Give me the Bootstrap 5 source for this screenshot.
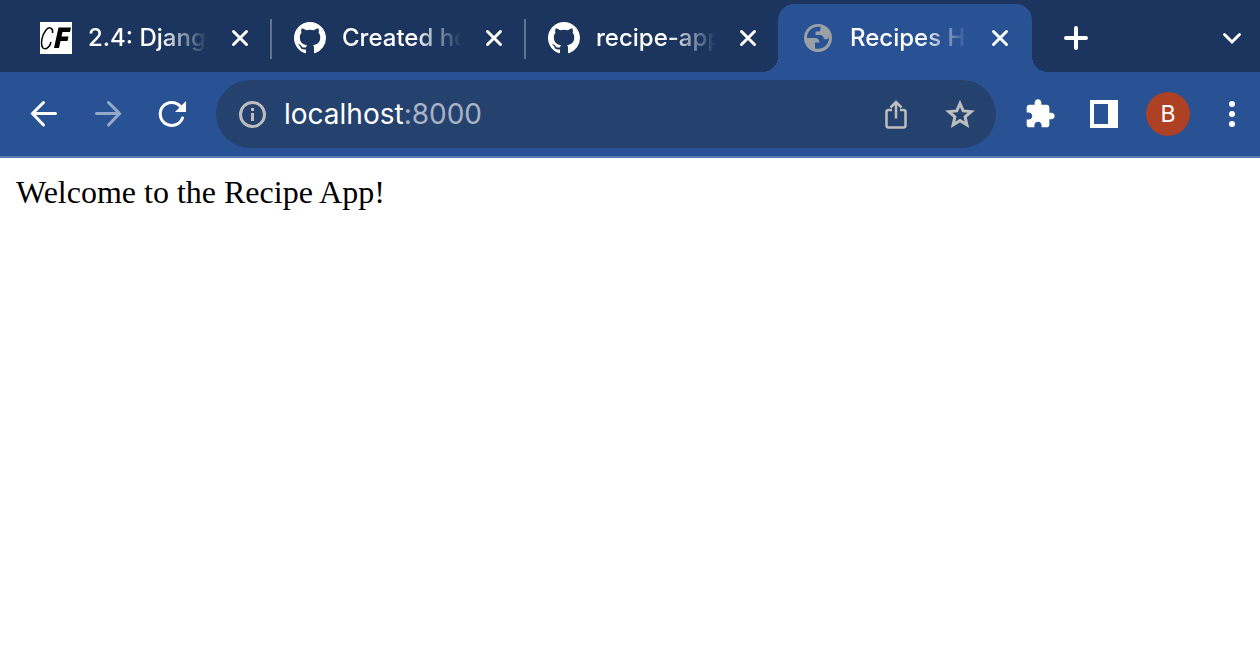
<!DOCTYPE html>
<html lang="en">
<head>
<meta charset="utf-8">
<meta name="viewport" content="width=device-width, initial-scale=1">
<title>Recipes Home</title>
<link href="https://cdn.jsdelivr.net/npm/bootstrap@5.3.0/dist/css/bootstrap.min.css" rel="stylesheet">
<style>
  :root { --frame: #1b355e; --bar: #295295; --omni: #25426f; }
  body { background: #fff; color: #000; }
  .chrome-ui { font-family: Inter, "Liberation Sans", sans-serif; color: #fff; }
  .tab-strip { background: var(--frame); height: 72px; padding-left: 18px; padding-right: 12px; padding-top: 4px; }
  .browser-tab { width: 254px; height: 68px; padding-left: 22px; position: relative; }
  .browser-tab.divided::after { content: ""; position: absolute; right: 0; top: 15px; width: 2px; height: 40px; background: #617391; }
  .browser-tab.current { background: var(--bar); border-radius: 16px 16px 0 0; margin-left: -2px; padding-left: 24px; }
  .browser-tab.current::before, .browser-tab.current::after { content: ""; position: absolute; bottom: 0; width: 16px; height: 16px; }
  .browser-tab.current::before { right: 100%; background: radial-gradient(circle at 0 0, transparent 16px, var(--bar) 16px); }
  .browser-tab.current::after { left: 100%; background: radial-gradient(circle at 100% 0, transparent 16px, var(--bar) 16px); }
  .tab-link { color: #fff; font-size: 24px; font-weight: 500; line-height: 32px; gap: 16px; }
  .tab-title { width: 120px; overflow: hidden; white-space: nowrap; -webkit-mask-image: linear-gradient(90deg, #000 60%, transparent); mask-image: linear-gradient(90deg, #000 60%, transparent); }
  .current .tab-title { width: 118px; }
  .icon-btn { background: none; border: 0; padding: 0; color: #fff; display: inline-flex; align-items: center; justify-content: center; flex: none; }
  .close-btn { width: 24px; height: 24px; margin-left: 20px; }
  .tool-bar { background: var(--bar); height: 86px; border-bottom: 2px solid #557ab0; padding-left: 12px; padding-right: 4px; }
  .nav-btn { width: 64px; height: 64px; }
  .new-tab-btn { width: 64px; height: 64px; margin-left: 12px; }
  .menu-btn { width: 48px; height: 64px; }
  .omnibox { background: var(--omni); height: 68px; margin-left: 12px; margin-right: 12px; padding-left: 20px; padding-right: 4px; }
  .muted-icon { color: #bdbdbd; }
  .url-field { font-size: 28px; line-height: 36px; margin-left: 16px; }
  .url-port { color: #a8b3c5; }
  .avatar { width: 44px; height: 44px; background: #ae4123; font-size: 23px; }
  .page-body { padding: 16px; font-family: "Liberation Serif", serif; font-size: 32px; line-height: 36px; }
</style>
</head>
<body>
<svg class="d-none" aria-hidden="true">
  <symbol id="octo" viewBox="0 0 16 16"><path fill="currentColor" d="M8 0C3.58 0 0 3.58 0 8c0 3.54 2.29 6.53 5.47 7.59.4.07.55-.17.55-.38 0-.19-.01-.82-.01-1.49-2.01.37-2.53-.49-2.69-.94-.09-.23-.48-.94-.82-1.13-.28-.15-.68-.52-.01-.53.63-.01 1.08.58 1.23.82.72 1.21 1.87.87 2.33.66.07-.52.28-.87.51-1.07-1.78-.2-3.64-.89-3.64-3.95 0-.87.31-1.59.82-2.15-.08-.2-.36-1.02.08-2.12 0 0 .67-.21 2.2.82.64-.18 1.32-.27 2-.27s1.36.09 2 .27c1.53-1.04 2.2-.82 2.2-.82.44 1.1.16 1.92.08 2.12.51.56.82 1.27.82 2.15 0 3.07-1.87 3.75-3.65 3.95.29.25.54.73.54 1.48 0 1.07-.01 1.93-.01 2.2 0 .21.15.46.55.38A8.01 8.01 0 0 0 16 8c0-4.42-3.58-8-8-8z"/></symbol>
  <symbol id="cross" viewBox="0 0 24 24"><path fill="none" stroke="currentColor" stroke-width="3" stroke-linecap="round" d="M5.500 5.500l13 13M18.500 5.500l-13 13"/></symbol>
</svg>
<header class="chrome-ui">
  <nav class="tab-strip d-flex" aria-label="Tabs">
    <div class="browser-tab divided d-flex align-items-center">
      <a href="#" class="tab-link d-flex text-decoration-none">
        <svg width="32" height="32" viewBox="0 0 32 32"><path fill="#fff" d="M0 0h32v32H0z"/><path fill="none" stroke="#000" stroke-width="1.500" d="M12.500 11C13.500 6 9 4 6 8C2 13 0 22 3 26C6 28 10 25 11 20"/><path d="M18.500 5.500h12.500l-1 4.500h-7.500l-1 4.500h7l-1 4.500h-7l-1.500 7h-5z"/></svg>
        <span class="tab-title">2.4: Django</span></a>
      <button class="icon-btn close-btn" aria-label="Close tab"><svg width="24" height="24"><use href="#cross"/></svg></button>
    </div>
    <div class="browser-tab divided d-flex align-items-center">
      <a href="#" class="tab-link d-flex text-decoration-none"><svg width="32" height="32"><use href="#octo"/></svg><span class="tab-title">Created home</span></a>
      <button class="icon-btn close-btn" aria-label="Close tab"><svg width="24" height="24"><use href="#cross"/></svg></button>
    </div>
    <div class="browser-tab d-flex align-items-center">
      <a href="#" class="tab-link d-flex text-decoration-none"><svg width="32" height="32"><use href="#octo"/></svg><span class="tab-title">recipe-app</span></a>
      <button class="icon-btn close-btn" aria-label="Close tab"><svg width="24" height="24"><use href="#cross"/></svg></button>
    </div>
    <div class="browser-tab current d-flex align-items-center">
      <a href="#" class="tab-link d-flex text-decoration-none" aria-current="page">
        <svg width="32" height="32" viewBox="0 0 32 32"><circle cx="16" cy="16" r="14" fill="#9aa0a6"/><path fill="#295295" d="M18.500 5C11 4 5 9 5 16h7.500C16 16 17.500 18 17.500 20.500H13v6C21 28 27 23 27 15.500C25.500 17.500 23.500 18 22 16.500C21 14.500 20.500 13 17.500 13H13.500V9.500H17.500C18.500 9 18.500 7 18.500 5z"/></svg>
        <span class="tab-title">Recipes Home</span></a>
      <button class="icon-btn close-btn" aria-label="Close tab"><svg width="24" height="24"><use href="#cross"/></svg></button>
    </div>
    <button class="icon-btn new-tab-btn align-self-center" aria-label="New tab"><svg width="24" height="24" viewBox="0 0 24 24"><path stroke="currentColor" stroke-width="4" stroke-linecap="round" d="M2 12h20M12 2v20"/></svg></button>
    <button class="icon-btn ms-auto align-self-center me-1" aria-label="Search tabs"><svg width="24" height="24" viewBox="0 0 24 24"><path fill="none" stroke="currentColor" stroke-width="3" stroke-linecap="round" d="M4.500 8.500l7.500 7.500 7.500-7.500"/></svg></button>
  </nav>
  <div class="tool-bar d-flex align-items-center">
    <button class="icon-btn nav-btn" aria-label="Back"><svg width="32" height="32" viewBox="0 0 32 32"><path fill="none" stroke="currentColor" stroke-width="3" stroke-linecap="round" d="M27.500 15.500H4.500M15.500 4.500L4.500 15.500l11 11.500"/></svg></button>
    <button class="icon-btn nav-btn opacity-50" aria-label="Forward"><svg width="32" height="32" viewBox="0 0 32 32"><path fill="none" stroke="currentColor" stroke-width="3" stroke-linecap="round" d="M4.500 15.500h23M16.500 4.500L27.500 15.500 16.500 27"/></svg></button>
    <button class="icon-btn nav-btn" aria-label="Reload"><svg width="32" height="32" viewBox="0 0 32 32"><path fill="none" stroke="currentColor" stroke-width="3" stroke-linecap="round" d="M26.500 20A11.500 11.500 0 1 1 24.500 8.500"/><path fill="currentColor" d="M30 3v11H19z"/></svg></button>
    <form class="omnibox rounded-pill d-flex align-items-center flex-grow-1">
      <button type="button" class="icon-btn muted-icon" aria-label="Site information"><svg width="32" height="32" viewBox="0 0 32 32"><circle cx="16.500" cy="16.500" r="12" fill="none" stroke="currentColor" stroke-width="3"/><path fill="currentColor" d="M15 10h3v3h-3zM15 15h3v8h-3z"/></svg></button>
      <a href="#" class="url-field text-white text-decoration-none">localhost<span class="url-port">:8000</span></a>
      <button type="button" class="icon-btn nav-btn muted-icon ms-auto" aria-label="Share"><svg width="32" height="32" viewBox="0 0 32 32"><path fill="none" stroke="currentColor" stroke-width="2.500" d="M12 12H8.500q-2 0-2 2V27.500q0 2 2 2h15q2 0 2-2V14q0-2-2-2H20M16 20.500V5M10.500 9.500L16 4l5.500 5.500"/></svg></button>
      <button type="button" class="icon-btn nav-btn muted-icon" aria-label="Bookmark"><svg width="32" height="32" viewBox="0 0 32 32"><path fill="none" stroke="currentColor" stroke-width="3" d="M16 5.500l3.200 7.400 8 .7-6.100 5.300 1.800 7.900-6.900-4.200-6.900 4.200 1.800-7.900-6.100-5.300 8-.7z"/></svg></button>
    </form>
    <button class="icon-btn nav-btn" aria-label="Extensions"><svg width="32" height="32" viewBox="0 0 24 24"><path fill="currentColor" d="M20.500 11H19V7c0-1.100-.9-2-2-2h-4V3.500C13 2.120 11.880 1 10.500 1S8 2.120 8 3.500V5H4c-1.100 0-1.990.9-1.990 2v3.800H3.500c1.490 0 2.700 1.210 2.700 2.700s-1.210 2.700-2.700 2.700H2V20c0 1.100.9 2 2 2h3.800v-1.500c0-1.490 1.210-2.700 2.700-2.700s2.700 1.210 2.700 2.700V22H17c1.100 0 2-.9 2-2v-4h1.500c1.380 0 2.500-1.120 2.500-2.500S21.880 11 20.500 11z"/></svg></button>
    <button class="icon-btn nav-btn" aria-label="Side panel"><svg width="28" height="28" viewBox="0 0 28 28"><path fill="currentColor" fill-rule="evenodd" d="M0 0h28v28H0zM4 4v20h14V4z"/></svg></button>
    <button class="icon-btn nav-btn" aria-label="Profile"><span class="avatar rounded-circle d-flex align-items-center justify-content-center">B</span></button>
    <button class="icon-btn menu-btn ms-2" aria-label="Menu"><svg width="8" height="28" viewBox="0 0 8 28"><g fill="currentColor"><circle cx="4" cy="4" r="3"/><circle cx="4" cy="14" r="3"/><circle cx="4" cy="24" r="3"/></g></svg></button>
  </div>
</header>
<main class="page-body">Welcome to the Recipe App!</main>
<script src="https://cdn.jsdelivr.net/npm/bootstrap@5.3.0/dist/js/bootstrap.bundle.min.js"></script>
</body>
</html>
